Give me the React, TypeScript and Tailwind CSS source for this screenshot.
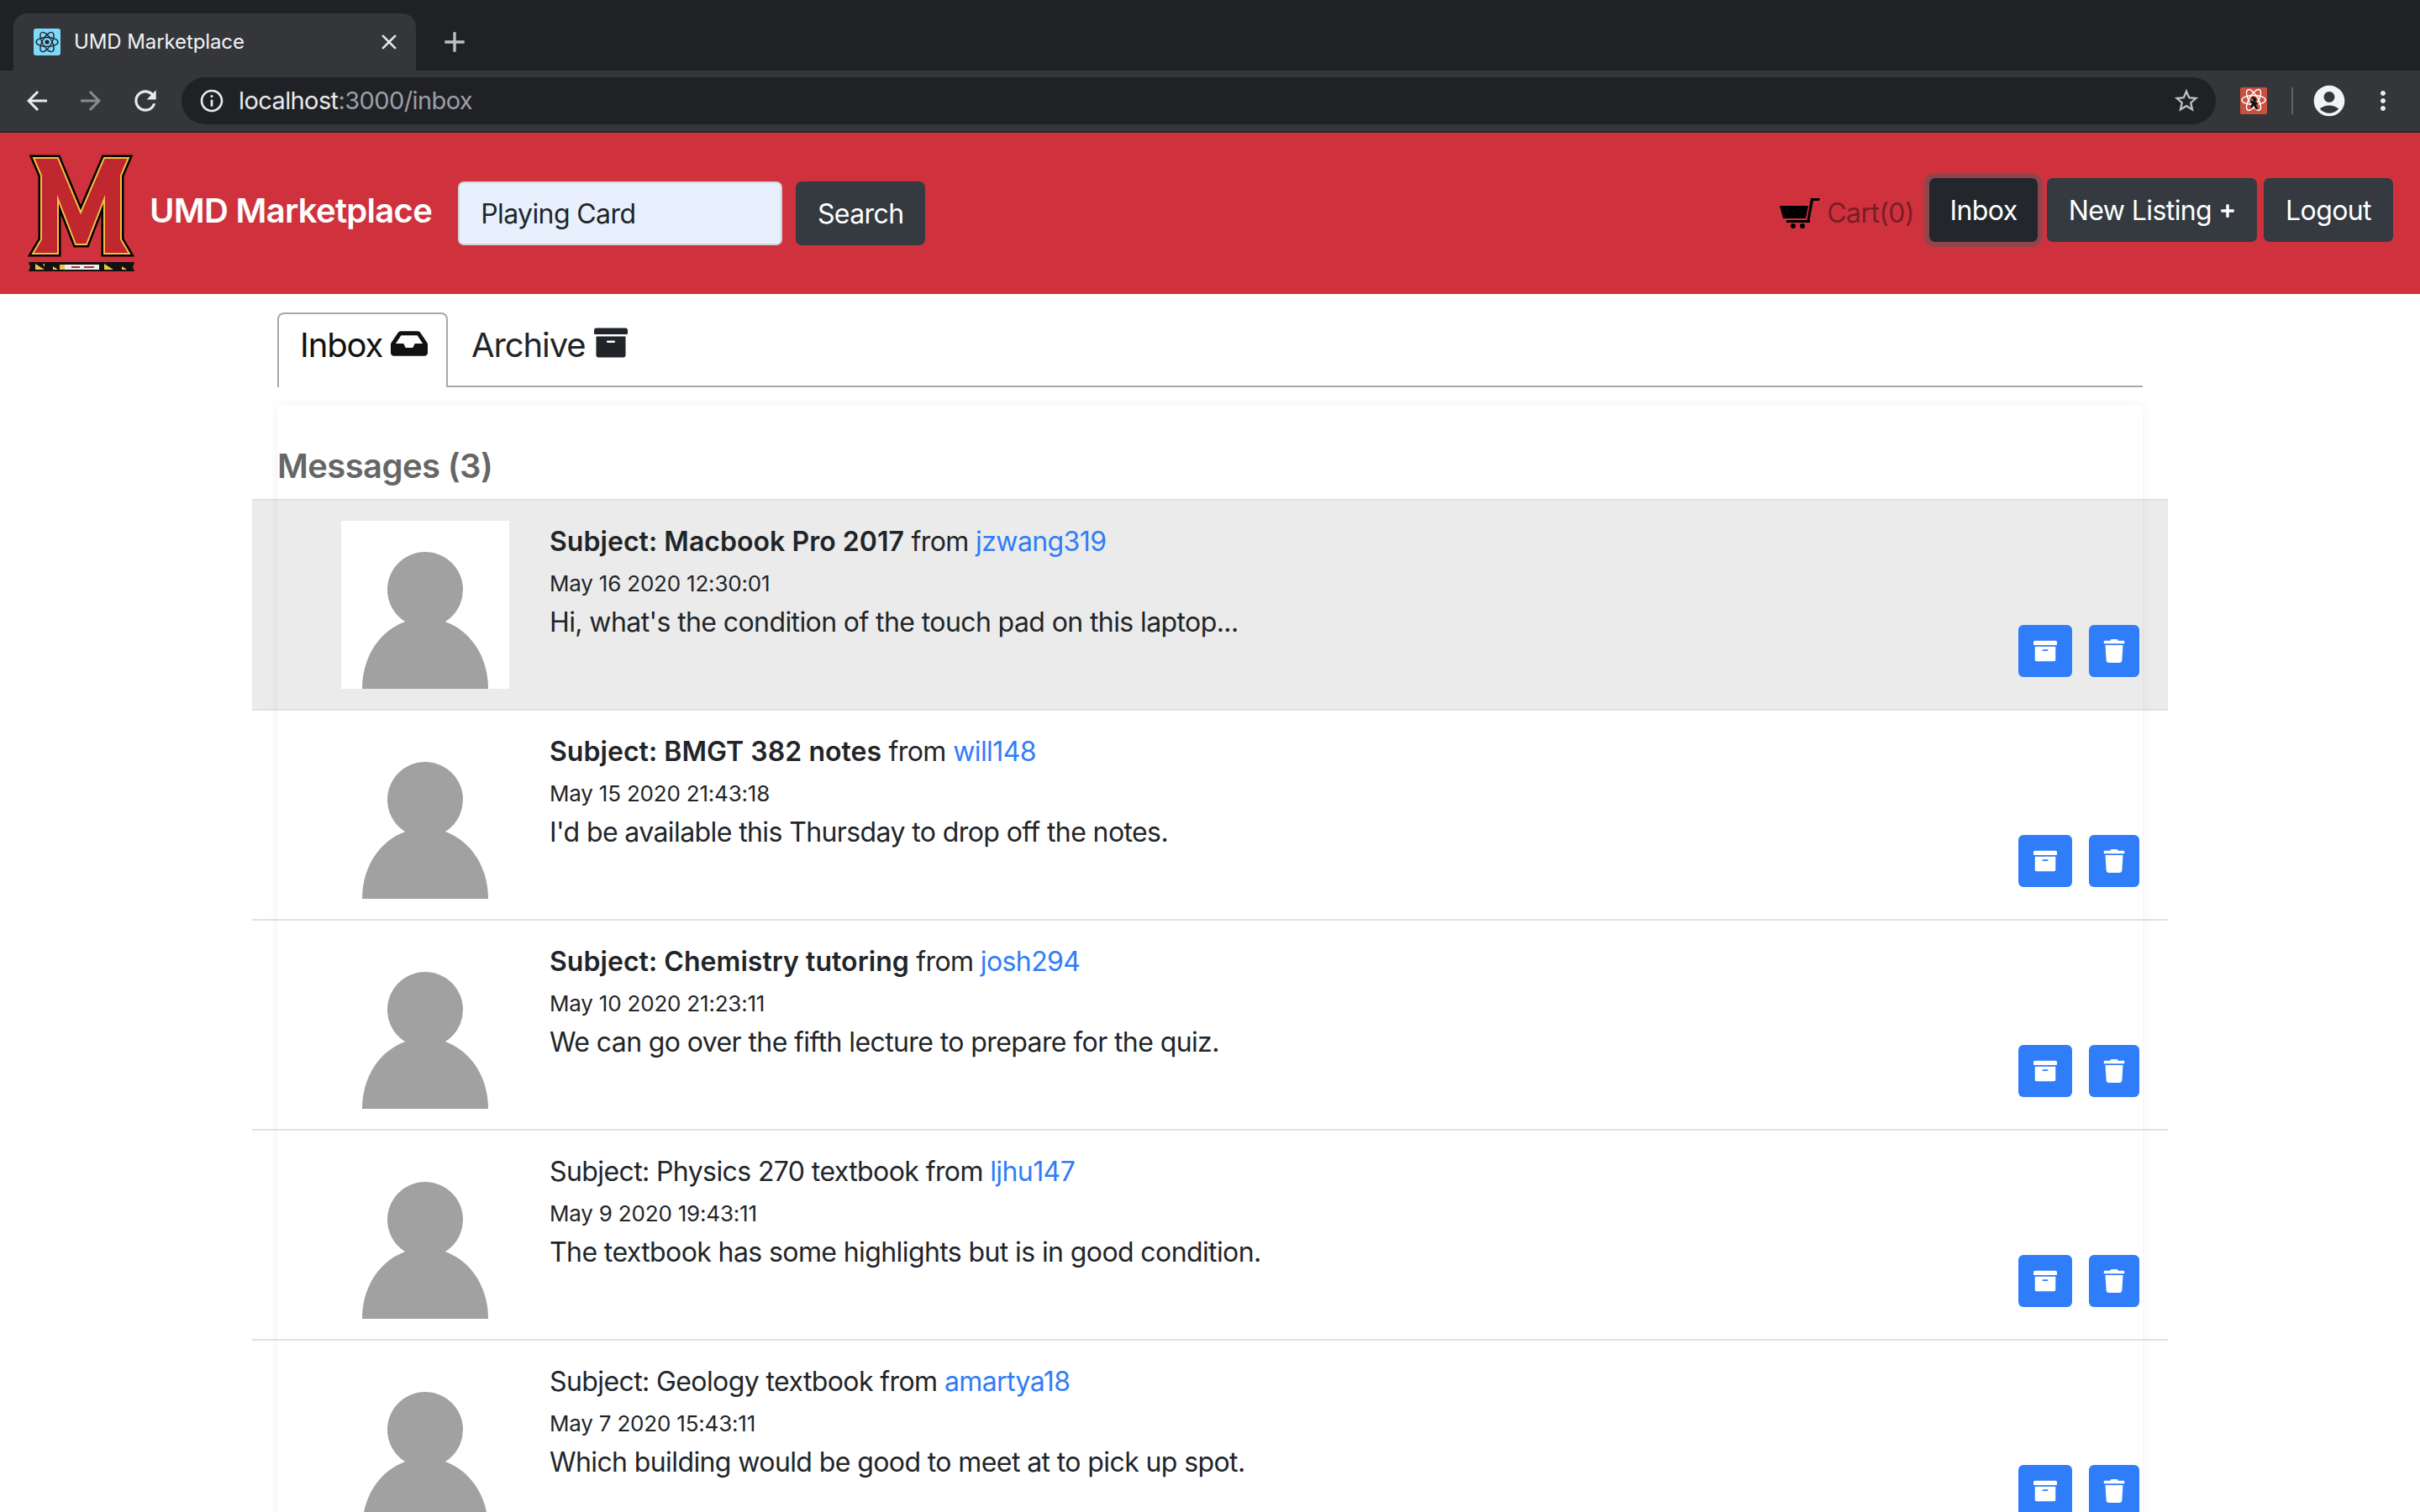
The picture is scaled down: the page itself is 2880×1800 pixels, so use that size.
import { FaArchive, FaInbox, FaPlus, FaTrash } from "react-icons/fa"
import { MdAccountCircle, MdAdd, MdArrowBack, MdArrowForward, MdClose, MdInfoOutline, MdMoreVert, MdRefresh, MdStarBorder } from "react-icons/md"

const messages = [
  { subject: "Macbook Pro 2017", from: "jzwang319", date: "May 16 2020 12:30:01", body: "Hi, what's the condition of the touch pad on this laptop...", unread: true, selected: true },
  { subject: "BMGT 382 notes", from: "will148", date: "May 15 2020 21:43:18", body: "I'd be available this Thursday to drop off the notes.", unread: true },
  { subject: "Chemistry tutoring", from: "josh294", date: "May 10 2020 21:23:11", body: "We can go over the fifth lecture to prepare for the quiz.", unread: true },
  { subject: "Physics 270 textbook", from: "ljhu147", date: "May 9 2020 19:43:11", body: "The textbook has some highlights but is in good condition." },
  { subject: "Geology textbook", from: "amartya18", date: "May 7 2020 15:43:11", body: "Which building would be good to meet at to pick up spot." },
]

const mPoints = "39,28 68,28 95,93 123,28 152,28 143,49 143,125 153,142 123,142 123,77 102,131 89,131 68,77 68,142 38,142 48,125 48,49"

const Logo = () => (
  <svg viewBox="30 22 130 146" className="mt-[2px] h-[146px] w-[130px] shrink-0">
    <polygon points={mPoints} fill="#000" stroke="#000" strokeWidth="7" strokeMiterlimit="8" />
    <polygon points={mPoints} fill="#c1272f" stroke="#f2c13d" strokeWidth="2" strokeMiterlimit="8" />
    <polygon points="33,152 159,152 157,158 159,163 33,163 35,158" fill="#111" />
    <polygon points="41,154 52,161 41,161" fill="#f2c13d" />
    <polygon points="50,154 52,154 52,158" fill="#f2c13d" />
    <polygon points="62,157 68,161 62,161" fill="#f2c13d" />
    <rect x="70" y="155" width="6" height="6" fill="#f2c13d" />
    <rect x="76" y="155" width="41" height="6" fill="#eee" />
    <rect x="84" y="157" width="10" height="2" fill="#c1272f" />
    <rect x="99" y="157" width="12" height="2" fill="#c1272f" />
    <polygon points="123,154 134,161 123,161" fill="#f2c13d" />
    <polygon points="144,157 150,161 144,161" fill="#f2c13d" />
  </svg>
)

const ReactFavicon = () => (
  <div className="flex h-[32px] w-[32px] items-center justify-center rounded-[3px] bg-[#7fd9fb]">
    <svg viewBox="0 0 32 32" className="h-[32px] w-[32px]" fill="none" stroke="#20232a" strokeWidth="1.4">
      <ellipse cx="16" cy="16" rx="13" ry="5.5" />
      <ellipse cx="16" cy="16" rx="13" ry="5.5" transform="rotate(60 16 16)" />
      <ellipse cx="16" cy="16" rx="13" ry="5.5" transform="rotate(120 16 16)" />
      <circle cx="16" cy="16" r="2.6" fill="#20232a" stroke="none" />
    </svg>
  </div>
)

const ExtensionIcon = () => (
  <div className="flex h-[32px] w-[32px] items-center justify-center rounded-[2px] bg-[#c8503f]">
    <svg viewBox="0 0 32 32" className="h-[32px] w-[32px]" fill="none" stroke="#fff" strokeWidth="1.5">
      <ellipse cx="16" cy="15" rx="14" ry="5.5" />
      <ellipse cx="16" cy="15" rx="14" ry="5.5" transform="rotate(60 16 15)" />
      <ellipse cx="16" cy="15" rx="14" ry="5.5" transform="rotate(120 16 15)" />
      <path d="M14 12 L18 14 L16 19 L20 26 M17 17 L13 24 M12 17 L21 20" stroke="#111" strokeWidth="2.6" />
    </svg>
  </div>
)

const CartIcon = () => (
  <svg viewBox="0 0 48 36" className="mt-[8px] h-[36px] w-[48px]">
    <polygon points="0,9 34,9 31,24 4,24" fill="#000" />
    <rect x="8" y="26" width="28" height="3" fill="#000" />
    <polygon points="37,0 48,0 47,3 40,3 35,29 32,29" fill="#000" />
    <circle cx="16" cy="33" r="3" fill="#000" />
    <circle cx="27" cy="33" r="3" fill="#000" />
  </svg>
)

const Avatar = () => (
  <div className="h-[200px] w-[200px] shrink-0 bg-white">
    <svg viewBox="0 0 200 200" className="h-[200px] w-[200px]">
      <circle cx="100" cy="82" r="45" fill="#a1a1a1" />
      <path d="M25 200 C25 152 58 116 100 116 C142 116 175 152 175 200 Z" fill="#a1a1a1" />
    </svg>
  </div>
)

const App = () => {
  return (
    <div className="flex h-[1800px] w-[2880px] flex-col overflow-hidden bg-white font-['Inter','Liberation_Sans',sans-serif] text-[32px] tracking-[-0.6px] text-[#212529]">
      {/* browser chrome */}
      <div className="flex h-[84px] shrink-0 items-end bg-[#202124] pl-[16px]">
        <div className="flex h-[68px] w-[479px] items-center rounded-t-[16px] bg-[#35363a] pl-[24px] pr-[17px] text-[24px] tracking-[-0.1px] text-[#f1f3f4]">
          <ReactFavicon />
          <span className="ml-[16px]">UMD Marketplace</span>
          <MdClose className="ml-auto text-[#e8eaed]" size={30} />
        </div>
        <div className="mb-[16px] ml-[26px] flex h-[36px] items-center text-[#bdc1c6]">
          <MdAdd size={40} />
        </div>
      </div>
      <div className="flex h-[72px] shrink-0 items-center bg-[#35363a] text-[#e8eaed]">
        <MdArrowBack className="ml-[26px]" size={36} />
        <MdArrowForward className="ml-[28px] text-[#8a8b8e]" size={36} />
        <MdRefresh className="ml-[28px]" size={38} />
        <div className="ml-[24px] flex h-[56px] w-[2421px] items-center rounded-full bg-[#202124] pl-[20px] pr-[18px] text-[29px]">
          <MdInfoOutline size={32} />
          <span className="ml-[16px]">localhost</span>
          <span className="text-[#9aa0a6]">:3000/inbox</span>
          <MdStarBorder className="ml-auto text-[#bdc1c6]" size={34} />
        </div>
        <div className="ml-[29px]"><ExtensionIcon /></div>
        <div className="ml-[29px] h-[32px] w-[2px] bg-[#5f6368]" />
        <MdAccountCircle className="ml-[21px] text-[#f1f3f4]" size={44} />
        <MdMoreVert className="ml-[24px]" size={36} />
      </div>
      <div className="h-[2px] shrink-0 bg-[#27282b]" />

      {/* navbar */}
      <div className="flex h-[192px] shrink-0 items-center bg-[#cf323d] pl-[31px] pr-[32px]">
        <Logo />
        <span className="mb-[6px] ml-[17px] text-[40px] font-semibold tracking-[-0.7px] text-white">UMD Marketplace</span>
        <div className="ml-[31px] flex h-[76px] w-[386px] items-center rounded-[7px] border-2 border-[#ced4da] bg-[#e8f0fe] pl-[25px] pt-[2px] text-[#212529]">Playing Card</div>
        <div className="ml-[16px] flex h-[76px] w-[154px] items-center justify-center rounded-[7px] bg-[#343a40] pt-[2px] text-white">Search</div>
        <div className="mb-[8px] ml-auto flex items-center">
          <CartIcon />
          <span className="ml-[8px] mt-[8px] text-[#791d25]">Cart(0)</span>
          <div className="ml-[18px] flex h-[76px] w-[129px] items-center justify-center rounded-[7px] bg-[#23272b] pt-[2px] text-white shadow-[0_0_0_6px_rgba(82,88,93,0.5)]">Inbox</div>
          <div className="ml-[11px] flex h-[76px] w-[250px] items-center justify-center gap-[10px] rounded-[7px] bg-[#343a40] pt-[2px] text-white">
            New Listing <FaPlus size={18} />
          </div>
          <div className="ml-[8px] flex h-[76px] w-[154px] items-center justify-center rounded-[7px] bg-[#343a40] pt-[2px] text-white">Logout</div>
        </div>
      </div>

      {/* tabs */}
      <div className="mx-auto mt-[22px] w-[2220px]">
        <div className="flex h-[89px] border-b-2 border-[#a8a8a8] text-[40px] tracking-[-1.1px]">
          <div className="flex h-[89px] w-[203px] items-start gap-[10px] rounded-t-[8px] border-2 border-b-0 border-[#a8a8a8] bg-white pl-[25px] pt-[7px] text-[#111]">
            Inbox <FaInbox className="mt-[6px]" size={44} />
          </div>
          <div className="flex items-start gap-[10px] pl-[28px] pt-[9px]">
            Archive <FaArchive className="mt-[7px]" size={40} />
          </div>
        </div>

        {/* messages card */}
        <div className="relative mt-[21px]">
          <div className="flex h-[112px] items-end pb-[15px] text-[40px] font-semibold leading-[48px] text-[#666]">Messages (3)</div>
          <div className="-mx-[30px] border-t-2 border-[#dee2e6]">
            {messages.map((m) => (
              <div key={m.from} className={`flex h-[250px] border-b-2 border-[#dee2e6] ${m.selected ? "bg-[#ebebeb]" : "bg-white"}`}>
                <div className="ml-[106px] mt-[24px]"><Avatar /></div>
                <div className="ml-[48px] pt-[25px]">
                  <div className="leading-[48px]">
                    <span className={m.unread ? "font-semibold tracking-[0.05px]" : ""}>Subject: {m.subject}</span> from <span className="text-[#2f7df8]">{m.from}</span>
                  </div>
                  <div className="text-[26px] leading-[52px] tracking-[-0.2px]">{m.date}</div>
                  <div className="leading-[40px]">{m.body}</div>
                </div>
                <div className="ml-auto mr-[34px] flex items-end gap-[20px] pb-[38px]">
                  <div className="flex h-[62px] w-[64px] items-center justify-center rounded-[6px] bg-[#2f7df8] text-white"><FaArchive size={28} /></div>
                  <div className="flex h-[62px] w-[60px] items-center justify-center rounded-[6px] bg-[#2f7df8] text-white"><FaTrash size={28} /></div>
                </div>
              </div>
            ))}
          </div>
          <div className="pointer-events-none absolute inset-0 shadow-[0_0_12px_rgba(0,0,0,0.06)]" />
        </div>
      </div>
    </div>
  )
}

export default App
